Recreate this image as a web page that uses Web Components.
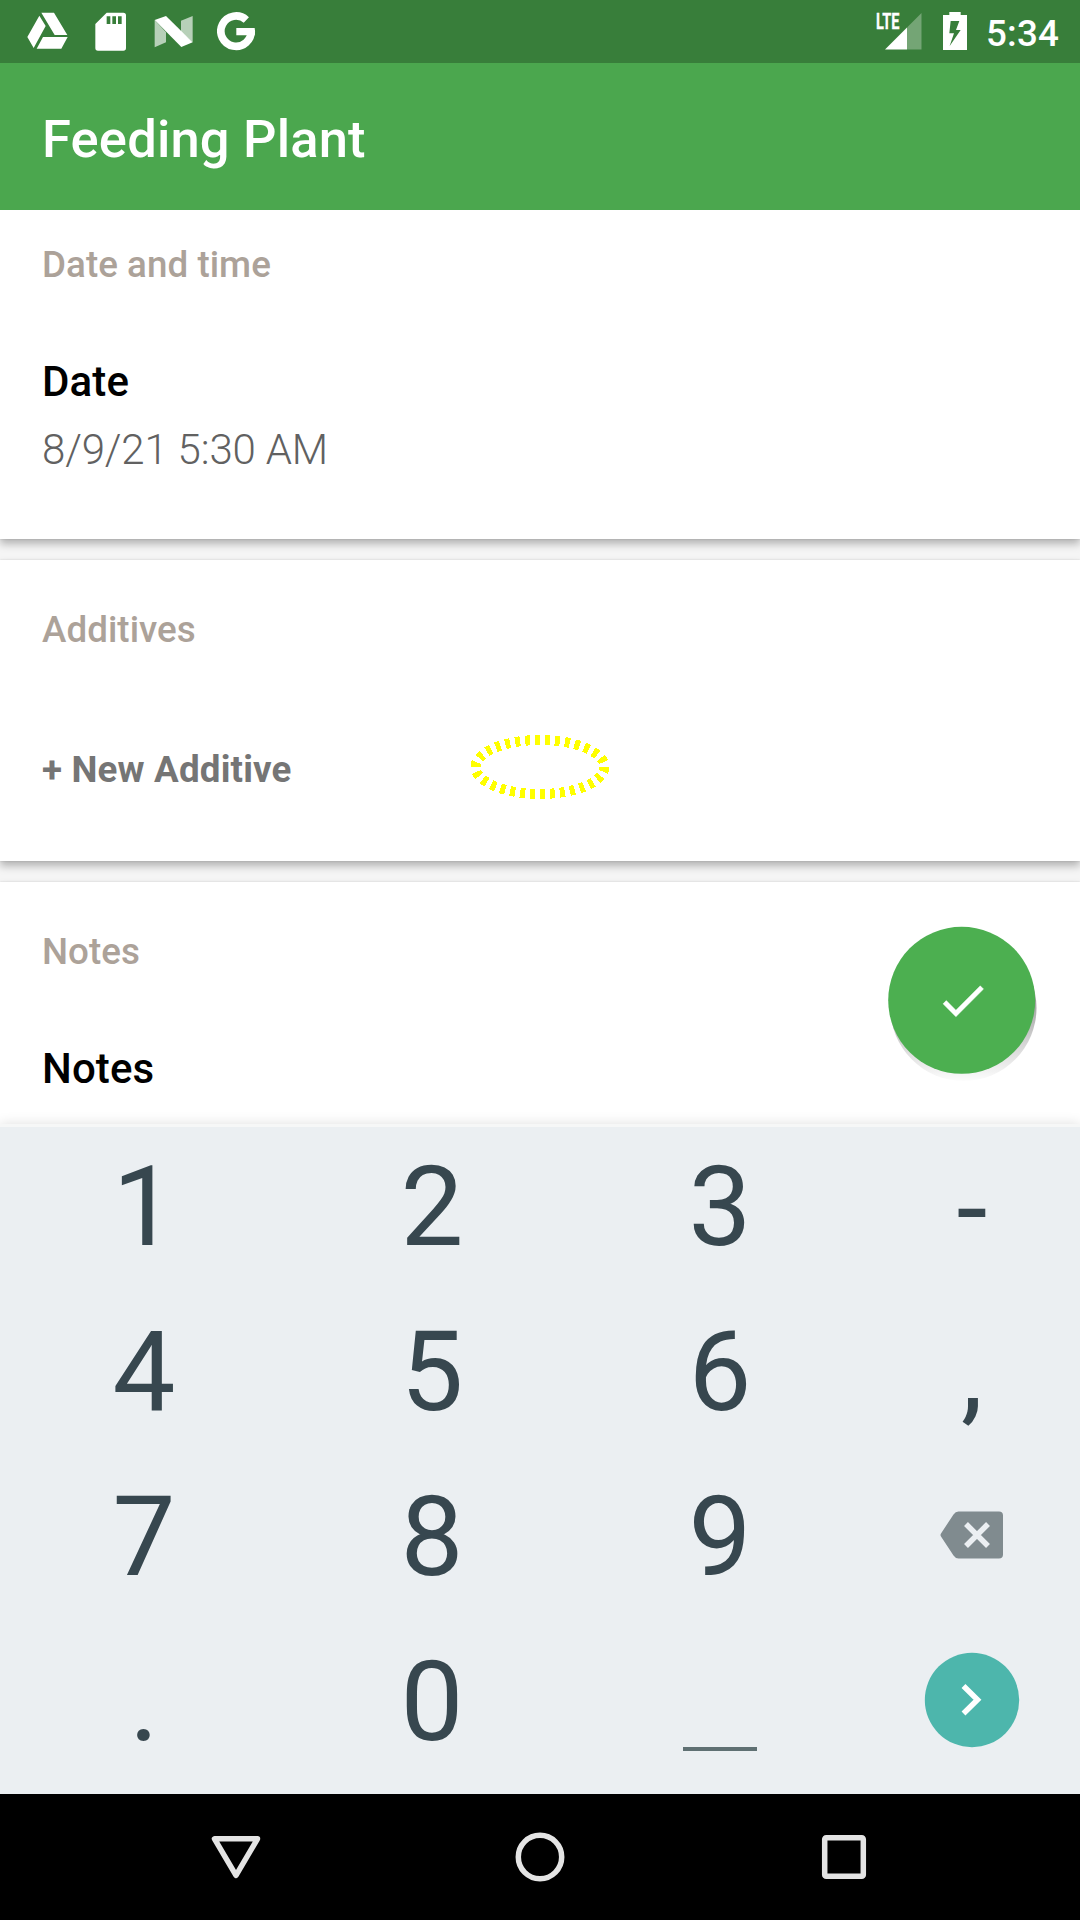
<!DOCTYPE html>
<html lang="en">
<head>
<meta charset="utf-8">
<title>Feeding Plant</title>
<style>
html,body{margin:0;padding:0}
body{width:1080px;height:1920px;overflow:hidden;font-family:Roboto,sans-serif;background:#f5f5f5}
</style>
</head>
<body>
<plant-screen>
  <status-bar slot="status" time="5:34"></status-bar>
  <app-bar slot="bar">Feeding Plant</app-bar>
  <form-card style="height:329px;--pad:33px" heading="Date and time">
    <form-field style="margin-top:70px" label="Date">8/9/21 5:30 AM</form-field>
  </form-card>
  <form-card style="height:301px" heading="Additives">
    <add-button>+ New Additive</add-button>
  </form-card>
  <form-card style="height:242px" heading="Notes">
    <form-field style="margin-top:70px" label="Notes"></form-field>
  </form-card>
  <touch-marker slot="overlay"></touch-marker>
  <confirm-fab slot="overlay"></confirm-fab>
  <num-pad slot="keyboard"></num-pad>
  <nav-bar slot="nav"></nav-bar>
</plant-screen>
<script>
function define(name, html) {
  customElements.define(name, class extends HTMLElement {
    constructor() {
      super();
      this.attachShadow({mode: 'open'}).innerHTML =
        html.replace(/\{(\w+)\}/g, (_, key) => this.getAttribute(key) || '');
    }
  });
}

define('plant-screen', `
<style>
:host{display:flex;flex-direction:column;position:relative;width:1080px;height:1920px;overflow:hidden}
main{display:flex;flex-direction:column;gap:21px;height:914px;flex:none;background:#f5f5f5;overflow:hidden}
</style>
<slot name="status"></slot><slot name="bar"></slot>
<main><slot></slot></main>
<slot name="keyboard"></slot><slot name="nav"></slot><slot name="overlay"></slot>`);

define('status-bar', `
<style>
:host{display:flex;align-items:flex-start;box-sizing:border-box;height:63px;flex:none;background:#387e3a;color:#fff;padding:12px 21px 0 27px}
svg{display:block;flex:none}
span{font-size:36.75px;font-weight:500;line-height:44px;white-space:nowrap}
.sp{flex:1}
.signal{display:grid}
.signal>*{grid-area:1/1}
.signal b{font-size:22px;line-height:26px;font-weight:700;height:26px;margin:-3px -6px 0 1px;transform:scaleX(.66);transform-origin:0 0;width:40px;-webkit-text-stroke:.3px #fff}
.signal svg{margin-left:1px}
</style>
<svg width="41" height="39" viewBox="81 36 123 117" fill="#fff"><path d="M118 47l19 31-36 66-19-33zM124 38h38l40 67h-38zM129 111h74l-19 35h-74z"/></svg>
<svg style="margin-left:27px" width="32" height="39" viewBox="285 36 96 117"><path fill="#fff" fill-rule="evenodd" d="M320 38h50q8 0 8 8v98q0 8-8 8h-76q-8 0-8-8V72zM320 49v23h11V49zM337 49v23h11V49zM354 49v23h11V49z"/></svg>
<svg style="margin-left:27px" width="39" height="39" viewBox="462 36 117 117" fill="#fff"><path opacity=".64" d="M464 60l34 37v30l-34 15zM543 62l35-14v79l-35-32z"/><path d="M464 60l34-12 80 79-34 14z"/></svg>
<svg style="margin-left:24px" width="39" height="40" viewBox="651 36 117 120"><path fill="none" stroke="#fff" stroke-width="23" d="M739 60A45.500 45.500 0 1 0 753.500 90"/><path fill="#fff" d="M709 84h55q2 11 0 22h-55z"/></svg>
<i class="sp"></i>
<div class="signal"><b>LTE</b><svg width="46" height="39" viewBox="0 0 46 39" fill="#fff"><path opacity=".3" d="M45.500 1v36.500H31V15.500z"/><path d="M9 37.500H31V15.500z"/></svg></div>
<svg style="margin-left:21px" width="24" height="39" viewBox="309 36 72 117"><path fill="#fff" fill-rule="evenodd" d="M328 36h34v9h19v105h-72V45h19zM332 63l-4 37h14l-13 38 33-48h-14l10-27z"/></svg>
<span style="margin:0 0 0 19px;letter-spacing:.15px">{time}</span>`);

define('app-bar', `
<style>:host{display:block;box-sizing:border-box;height:147px;flex:none;background:#4ba74e;color:#fff;font-size:52.5px;font-weight:500;line-height:62px;padding:45px 42px 0;letter-spacing:.17px}</style>
<slot></slot>`);

define('form-card', `
<style>
:host{display:block;box-sizing:border-box;flex:none;background:#fff;padding:var(--pad,47.5px) 42px 0;box-shadow:0 5px 8px rgba(0,0,0,.27),0 0 2px rgba(0,0,0,.13)}
h2{margin:0;font-size:36.75px;line-height:44px;font-weight:500;color:#aca299;letter-spacing:.05px}
</style>
<h2>{heading}</h2><slot></slot>`);

define('form-field', `
<style>
:host{display:block}
b{display:block;font-size:42px;line-height:50px;font-weight:500;color:#000;letter-spacing:.12px}
span{display:block;margin-top:18px;font-size:42px;line-height:50px;font-weight:300;color:#616161;letter-spacing:-.17px}
</style>
<b>{label}</b><span><slot></slot></span>`);

define('add-button', `
<style>:host{display:block;margin-top:96px;font-size:36.75px;line-height:44px;font-weight:700;color:#757575;letter-spacing:.17px}</style><slot></slot>`);

define('touch-marker', `
<style>:host{display:block;position:absolute;left:468px;top:733px}svg{display:block}</style>
<svg width="144" height="68"><ellipse cx="72" cy="34" rx="64.500" ry="27" pathLength="300" fill="none" stroke="#ff0" stroke-width="10" stroke-dasharray="5 5" shape-rendering="crispEdges"/></svg>`);

define('confirm-fab', `
<style>:host{display:block;position:absolute;left:880px;top:920px}svg{display:block}</style>
<svg width="165" height="170">
<defs><linearGradient id="s" gradientUnits="userSpaceOnUse" x1="84" y1="84" x2="84" y2="161"><stop offset="0" stop-color="#000" stop-opacity=".36"/><stop offset=".5" stop-color="#000" stop-opacity=".17"/><stop offset="1" stop-color="#000" stop-opacity=".01"/></linearGradient></defs>
<circle cx="83.500" cy="88" r="73" fill="url(#s)"/>
<circle cx="81.700" cy="80.300" r="73.500" fill="#4caf50"/>
<path transform="translate(55.200 53) scale(2.300)" fill="#fff" stroke="#fff" stroke-width=".2" d="M9 16.170L4.830 12l-1.420 1.410L9 19 21 7l-1.410-1.410z"/></svg>`);

define('num-key', `
<style>:host{display:flex;align-items:center;justify-content:center;font-size:112px;line-height:132px;color:#37474f;padding-top:var(--drop,3px)}</style><slot></slot>`);

define('num-pad', `
<style>
:host{display:block;position:relative;box-sizing:border-box;height:670px;flex:none;background:#ebeff2;border-top:3px solid #f6f7f7;box-shadow:0 0 12px rgba(0,0,0,.13)}
.grid{display:grid;grid-template-columns:288px 288px 288px 216px;grid-template-rows:repeat(4,165px);margin-top:-4.5px}
.cell{display:flex;align-items:center;justify-content:center}
.space{align-items:flex-end}
svg{display:block}
.space i{width:74px;height:4px;background:#5f7073;margin-bottom:31.500px}
</style>
<div class="grid">
<num-key>1</num-key><num-key>2</num-key><num-key>3</num-key><num-key style="--drop:8px">-</num-key>
<num-key>4</num-key><num-key>5</num-key><num-key>6</num-key><num-key>,</num-key>
<num-key>7</num-key><num-key>8</num-key><num-key>9</num-key>
<div class="cell"><svg width="64" height="49"><path fill="#808b8f" d="M18.500.5H59q4 0 4 4v39q0 4-4 4H18.500q-3 0-5-3L1 25.500q-1-1.500 0-3L13.500 3.500q2-3 5-3z"/><path d="M26 13l22 22M48 13L26 35" stroke="#ebeff2" stroke-width="5.500"/></svg></div>
<num-key>.</num-key><num-key>0</num-key>
<div class="cell space"><i></i></div>
<div class="cell"><svg width="96" height="96"><circle cx="48" cy="48" r="47.200" fill="#4db6ac"/><path d="M39.500 34L53.500 47.800 39.500 61.500" fill="none" stroke="#fff" stroke-width="5.500"/></svg></div>
</div>`);

define('nav-bar', `
<style>:host{display:flex;height:126px;flex:none;background:#000;align-items:center;justify-content:center;gap:254px}svg{display:block}</style>
<svg width="50" height="50" fill="none" stroke="#e4e4e4" stroke-width="5.500" stroke-linejoin="round"><path d="M3.500 6.800h43L25 43.300z"/></svg>
<svg width="50" height="50" fill="none" stroke="#e4e4e4" stroke-width="5.500"><circle cx="25" cy="25" r="21.700"/></svg>
<svg width="50" height="50" fill="none" stroke="#e4e4e4" stroke-width="5.500"><rect x="5.700" y="5.700" width="38.600" height="38.600" rx="1.500"/></svg>`);
</script>
</body>
</html>
